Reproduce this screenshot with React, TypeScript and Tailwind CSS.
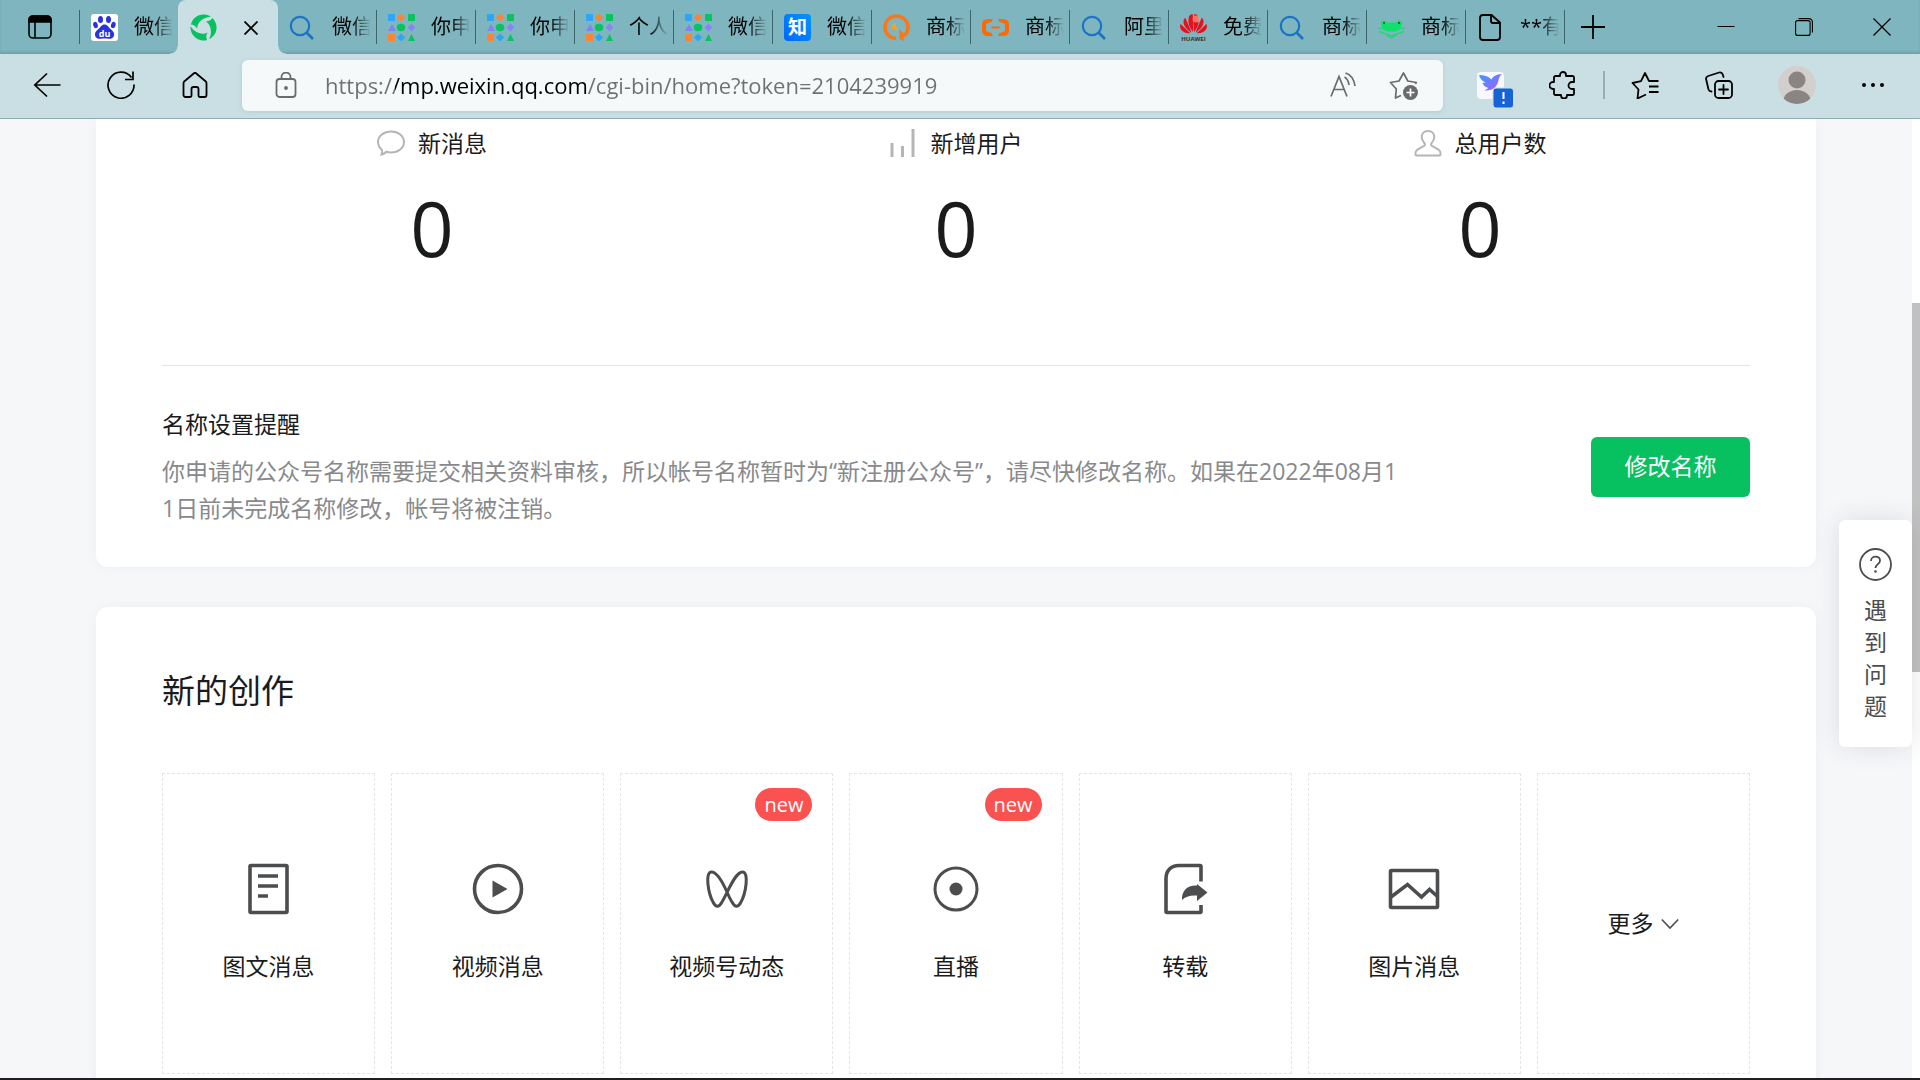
import type { ReactNode } from "react";

const BLADE = "M9 -9.400A13 13 0 0 1 5.500 11.800C8.800 6 8 -2.800 2.300 -6C5 -6 7.500 -7 9 -9.400Z";

const WechatFavicon = () => (
  <svg viewBox="-13.5 -13.5 27 27" className="size-[27px]" fill="#07c160">
    <path d={BLADE} />
    <path d={BLADE} transform="rotate(120)" />
    <path d={BLADE} transform="rotate(240)" />
  </svg>
);

const BaiduFavicon = () => (
  <svg viewBox="0 0 27 27" className="size-[27px]">
    <rect width="27" height="27" rx="3" fill="#fff" />
    <g fill="#2932e1">
      <ellipse cx="9.500" cy="5.500" rx="2.500" ry="3.500" />
      <ellipse cx="17.500" cy="5.500" rx="2.500" ry="3.500" />
      <ellipse cx="4.500" cy="11" rx="2.300" ry="3.200" transform="rotate(-15 4.500 11)" />
      <ellipse cx="22.300" cy="11" rx="2.300" ry="3.200" transform="rotate(15 22.300 11)" />
      <path d="M13.500 10.500c-3 0-3.800 2.500-6 4.500-2 1.800-4 3.500-3.500 6.200.6 3.200 3.500 3.800 5.500 3.500 2.500-.3 5.500-.3 8 0 2.200.2 5-.3 5.600-3.500.5-2.700-1.600-4.400-3.600-6.200-2.200-2-3-4.500-6-4.500z" />
    </g>
    <text x="13.500" y="22.500" textAnchor="middle" fontSize="9" fontWeight="700" fill="#fff" fontFamily="Open Sans">
      du
    </text>
  </svg>
);

const SearchFavicon = () => (
  <svg viewBox="0 0 27 27" className="size-[27px]" fill="none" stroke="#1a73c9" strokeWidth="2.200">
    <circle cx="11" cy="12" r="9.200" />
    <path d="M17.500 18.500l6.500 6.500" strokeWidth="2.600" />
  </svg>
);

const GridFavicon = () => (
  <svg viewBox="0 0 27 27" className="size-[27px]">
    <rect x="0" y="0" width="7" height="7" fill="#2ea6f7" />
    <path d="M13 -0.500l4.200 4-4.200 4-4.200-4z" fill="#fa8535" />
    <rect x="20" y="0" width="7" height="7" fill="#0bc160" />
    <path d="M4 10l4 7H0z" fill="#7f83f7" />
    <ellipse cx="13" cy="13.500" rx="4.300" ry="3.700" fill="#0bc160" />
    <path d="M23.500 9.500l3.800 4-3.800 4-3.800-4z" fill="#8a83f7" />
    <rect x="0" y="20" width="7" height="7" fill="#fa8535" />
    <path d="M13 19.500l4.200 4-4.200 4-4.200-4z" fill="#2ea6f7" />
    <path d="M23.500 20l3.500 7h-7z" fill="#0bc160" />
  </svg>
);

const ZhihuFavicon = () => (
  <span className="flex size-[27px] items-center justify-center rounded bg-gradient-to-tr from-[#0066ff] to-[#0095ff] text-[19px] leading-none font-bold text-white">
    知
  </span>
);

const OrangeQFavicon = () => (
  <svg viewBox="0 0 27 27" className="size-[27px]" fill="none">
    <path d="M13 24.500C6 24 2 19 2 13A11.500 11 0 0 1 25 13C25 16.500 23.800 19 22 21" stroke="#f8781a" strokeWidth="3.600" />
    <path d="M11.500 10.500l-2 3M13.500 14.500l-1.500-1" stroke="#fba026" strokeWidth="3" strokeLinecap="round" />
    <path d="M16 15.500l8.500 6.500-4 1 .5 4-4.500-1.500z" fill="#f8781a" />
  </svg>
);

const AliyunFavicon = () => (
  <svg viewBox="0 0 27 27" className="size-[27px]" fill="#ff6a00">
    <path d="M11 5H5.500A5.500 5.500 0 0 0 0 10.500v6A5.500 5.500 0 0 0 5.500 22H11l-1.500-3-4-1.200c-.8-.2-1.500-.9-1.500-1.700v-5.200c0-.8.7-1.500 1.500-1.700l4-1.200z" />
    <path d="M16 5h5.500a5.500 5.500 0 0 1 5.500 5.500v6a5.500 5.500 0 0 1-5.500 5.500H16l1.500-3 4-1.200c.8-.2 1.500-.9 1.500-1.700v-5.200c0-.8-.7-1.500-1.500-1.700l-4-1.200z" />
    <rect x="9.500" y="12.500" width="8" height="2" />
  </svg>
);

const HuaweiFavicon = () => (
  <svg viewBox="0 0 27 27" className="size-[27px]">
    <g fill="#e8101c">
      <path d="M12.800 18C9 13 7.500 8 9 2.500c.6-1.700 2-2.300 3.600-2.500 1 5 1 12 .2 18z" />
      <path d="M14.200 18C18 13 19.500 8 18 2.500c-.6-1.700-2-2.300-3.600-2.500-1 5-1 12-.2 18z" />
      <path d="M11.500 18.500C7 16 3.500 12 3.500 7.500c0-1.500.5-2.800 1.800-3.800C7 8 9.500 13 11.500 18.500z" />
      <path d="M15.500 18.500c4.500-2.500 8-6.500 8-11 0-1.500-.5-2.800-1.800-3.800-1.700 4.300-4.200 9.300-6.200 14.800z" />
      <path d="M10.500 19.300C5.500 19.500 1 17.500.2 13.500c-.3-1.500 0-2.700.5-3.500 2.800 3 6.300 6 9.800 9.300z" />
      <path d="M16.500 19.300c5 .2 9.500-1.800 10.300-5.800.3-1.500 0-2.700-.5-3.500-2.800 3-6.300 6-9.800 9.300z" />
    </g>
    <circle cx="16" cy="5" r="3.500" fill="#ff9a86" opacity=".7" />
    <text x="13.500" y="26.500" textAnchor="middle" fontSize="6" fontWeight="700" fill="#333" fontFamily="Open Sans">
      HUAWEI
    </text>
  </svg>
);

const FrogFavicon = () => (
  <svg viewBox="0 0 27 27" className="size-[27px]">
    <g fill="#0fe069">
      <circle cx="6" cy="9.500" r="3" />
      <circle cx="21" cy="9.500" r="3" />
      <path d="M5 10c4-2 13-2 17 0 2.500 3 1 5-1 6-4 2-11 2-15 0-2-1-3.500-3-1-6z" />
    </g>
    <path d="M.5 13.500l2.500 1.500M26.500 13.500L24 15M1 17.500l12.500 4.300L26 17.500M8.500 21.500l5 2 5-2" fill="none" stroke="#0fe069" strokeWidth="1.300" />
    <circle cx="6" cy="9" r="1" fill="#143" />
    <circle cx="21" cy="9" r="1" fill="#143" />
  </svg>
);

const PageFavicon = () => (
  <svg viewBox="0 0 27 27" className="size-[27px]" fill="none" stroke="#000" strokeWidth="1.800">
    <path d="M6 1h8.500L23 8.500V23a3 3 0 0 1-3 3H6a3 3 0 0 1-3-3V4a3 3 0 0 1 3-3z" />
    <path d="M14 1v6a2 2 0 0 0 2 2H23" />
  </svg>
);

type Tab = { title: string; icon: ReactNode; noSeparator?: boolean };

const tabsAfterActive: Tab[] = [
  { title: "微信", icon: <SearchFavicon />, noSeparator: true },
  { title: "你申", icon: <GridFavicon /> },
  { title: "你申", icon: <GridFavicon /> },
  { title: "个人", icon: <GridFavicon /> },
  { title: "微信", icon: <GridFavicon /> },
  { title: "微信", icon: <ZhihuFavicon /> },
  { title: "商标", icon: <OrangeQFavicon /> },
  { title: "商标", icon: <AliyunFavicon /> },
  { title: "阿里", icon: <SearchFavicon /> },
  { title: "免费", icon: <HuaweiFavicon /> },
  { title: "商标", icon: <SearchFavicon /> },
  { title: "商标", icon: <FrogFavicon /> },
  { title: "**有", icon: <PageFavicon /> },
];

const Separator = () => <span className="h-[34px] w-px shrink-0 bg-[#3f656b]" />;

const BrowserTab = ({ title, icon, noSeparator }: Tab) => (
  <>
    {!noSeparator && <Separator />}
    <button type="button" role="tab" aria-selected={false} className="flex h-full w-[98px] items-center pl-[11px] text-left">
      <span className="w-[27px] shrink-0">{icon}</span>
      <span className="ml-4 w-10 text-xl leading-7 whitespace-nowrap text-black [mask-image:linear-gradient(90deg,#000_20px,transparent_39px)]">
        {title}
      </span>
    </button>
  </>
);

const TabStrip = () => (
  <div className="flex h-[54px] shrink-0 items-center bg-[#7fb5be] shadow-[inset_0_-2px_2px_rgba(60,110,120,0.25)]">
    <button type="button" aria-label="标签页操作" className="flex w-[79px] shrink-0 justify-center">
      <svg viewBox="0 0 24 24" className="size-6" fill="none" stroke="#000" strokeWidth="1.600">
        <rect x="1" y="1" width="22" height="22" rx="4" />
        <path d="M1 5a4 4 0 0 1 4-4h14a4 4 0 0 1 4 4v2H1z" fill="#000" />
        <path d="M7 7v16" />
      </svg>
    </button>
    <div role="tablist" className="flex h-full items-center">
      <BrowserTab title="微信" icon={<BaiduFavicon />} />
      <div
        role="tab"
        aria-selected
        className="relative flex h-full w-[100px] items-center justify-between rounded-t-lg bg-[#c9dfe3] pr-5 pl-3 before:absolute before:bottom-0 before:-left-2 before:size-2 before:bg-[radial-gradient(circle_at_0_0,transparent_7px,#c9dfe3_8px)] after:absolute after:-right-2 after:bottom-0 after:size-2 after:bg-[radial-gradient(circle_at_100%_0,transparent_7px,#c9dfe3_8px)]"
      >
        <WechatFavicon />
        <button type="button" aria-label="关闭标签页" className="mt-0.5">
          <svg viewBox="0 0 14 14" className="size-3.5" stroke="#000" strokeWidth="1.800">
            <path d="M0.500 0.500l13 13M13.500 0.500l-13 13" />
          </svg>
        </button>
      </div>
      {tabsAfterActive.map((tab, i) => (
        <BrowserTab key={i} {...tab} />
      ))}
      <Separator />
    </div>
    <button type="button" aria-label="新建标签页" className="ml-4">
      <svg viewBox="0 0 24 24" className="size-6" stroke="#000" strokeWidth="1.800">
        <path d="M12 0v24M0 12h24" />
      </svg>
    </button>
    <div className="mr-[29px] ml-auto flex items-center gap-[60px]">
      <button type="button" aria-label="最小化">
        <svg viewBox="0 0 18 18" className="size-[18px]" stroke="#000" strokeWidth="1">
          <path d="M0.500 8.500h17" />
        </svg>
      </button>
      <button type="button" aria-label="还原">
        <svg viewBox="0 0 18 18" className="size-[18px]" fill="none" stroke="#000" strokeWidth="1.100">
          <rect x="0.600" y="2.600" width="14.500" height="14.800" rx="2" />
          <path d="M3.500 0.600h10.500a3.400 3.400 0 0 1 3.400 3.400v10.500" />
        </svg>
      </button>
      <button type="button" aria-label="关闭">
        <svg viewBox="0 0 18 18" className="size-[18px]" stroke="#000" strokeWidth="1.200">
          <path d="M0.500 0.500l17 17M17.500 0.500l-17 17" />
        </svg>
      </button>
    </div>
  </div>
);

const ToolButton = ({ label, children }: { label: string; children: ReactNode }) => (
  <button type="button" aria-label={label} className="flex size-10 shrink-0 items-center justify-center">
    {children}
  </button>
);

const Toolbar = () => (
  <div className="flex h-[65px] shrink-0 items-center border-b border-[#8fabb3] bg-[#c9dfe3] px-[27px] pb-0.5">
    <div className="flex gap-[34px]">
      <ToolButton label="返回">
        <svg viewBox="0 0 28 28" className="size-7" fill="none" stroke="#000" strokeWidth="1.700">
          <path d="M27.500 14H1.500M14 2.500L1.800 14 14 25.500" />
        </svg>
      </ToolButton>
      <ToolButton label="刷新">
        <svg viewBox="0 0 28 28" className="size-7" fill="none" stroke="#000" strokeWidth="1.700">
          <path d="M27 13.500A13 13 0 1 1 24.500 6.500" />
          <path d="M26 0.500v8h-8" />
        </svg>
      </ToolButton>
      <ToolButton label="主页">
        <svg viewBox="0 0 26 26" className="size-[26px]" fill="none" stroke="#000" strokeWidth="1.800" strokeLinejoin="round">
          <path d="M1.500 11.500c0-.9.400-1.700 1-2.300L12 1.200c.6-.5 1.400-.5 2 0l9.500 8c.6.600 1 1.400 1 2.300V23a2 2 0 0 1-2 2H18a1.500 1.500 0 0 1-1.500-1.500V17a2 2 0 0 0-2-2h-3a2 2 0 0 0-2 2v6.500A1.500 1.500 0 0 1 8 25H3.500a2 2 0 0 1-2-2z" />
        </svg>
      </ToolButton>
    </div>
    <div className="ml-[27px] flex h-[51px] min-w-0 flex-1 items-center rounded-md bg-[#f5f9fa] pr-5 pl-6 shadow-[0_1px_4px_rgba(60,110,120,0.15)]">
      <ToolButton label="查看站点信息">
        <svg viewBox="0 0 22 26" className="h-[26px] w-[22px]" fill="none" stroke="#6b6b6b" strokeWidth="1.800">
          <rect x="1.500" y="7" width="19" height="18" rx="3" />
          <path d="M6.500 7V5a4.500 4.500 0 0 1 9 0v2" />
          <circle cx="11" cy="16" r="1" fill="#6b6b6b" />
        </svg>
      </ToolButton>
      <input
        type="text"
        aria-label="地址栏"
        defaultValue="https://mp.weixin.qq.com/cgi-bin/home?token=2104239919"
        className="ml-[19px] h-9 min-w-0 flex-1 bg-[linear-gradient(90deg,#6e7072_70px,#000_70px,#000_262px,#6e7072_262px)] bg-clip-text text-[22px] leading-9 text-transparent outline-none"
      />
      <ToolButton label="大声朗读">
        <svg viewBox="0 0 26 26" className="size-[26px]" fill="none" stroke="#6b6b6b" strokeWidth="1.700">
          <path d="M1 24.500L9 4.500l8 20M3.800 17.500h10.500" />
          <path d="M14.500 5c2.500 1.500 4 4 4.500 8M15.500 1C20.500 2.500 24 7 25 14" />
        </svg>
      </ToolButton>
      <span className="ml-5 flex">
        <ToolButton label="添加到收藏夹">
          <svg viewBox="0 0 29 29" className="size-[29px]" fill="none" stroke="#6b6b6b" strokeWidth="1.700" strokeLinejoin="round">
            <path d="M12 24.500L6.500 27l.8-9L1.500 11.500l8.500-1.500L14.500 2l4.300 8 8.500 1.500-1 1.500" />
            <circle cx="21.500" cy="21.500" r="7.500" fill="#6b6b6b" stroke="none" />
            <path d="M21.500 17.500v8M17.500 21.500h8" stroke="#fff" />
          </svg>
        </ToolButton>
      </span>
    </div>
    <div className="ml-8 flex items-center">
      <ToolButton label="扩展：迅雷">
        <svg viewBox="0 0 40 46" className="h-[46px] w-10 shrink-0">
          <defs>
            <linearGradient id="bird" x1="0" y1="0" x2="1" y2="1">
              <stop offset="0" stopColor="#3d9bff" />
              <stop offset="1" stopColor="#a35cff" />
            </linearGradient>
          </defs>
          <rect x="2" y="10" width="27" height="27" rx="4" fill="#f8f8ff" />
          <path
            d="M4 13c5 0 9 1 12.500 4.500C18 14 21.500 12.500 27 12c-2 1.500-3 3.500-3.500 6-1 6-5 11-14 10.500l4-2.500c-3-.5-5-2.500-6-5l3-.5C7 19 5 16.500 4 13z"
            fill="url(#bird)"
          />
          <rect x="18" y="26" width="20.500" height="20" rx="3" fill="#1763d4" stroke="#c9dfe3" />
          <path d="M28.500 30v7M28.500 39.500v2.500" stroke="#fff" strokeWidth="2" />
        </svg>
      </ToolButton>
      <span className="ml-7 flex">
        <ToolButton label="扩展">
          <svg viewBox="0 0 28 28" className="size-7" fill="none" stroke="#000" strokeWidth="1.800" strokeLinejoin="round">
            <path d="M5 6.500a1.500 1.500 0 0 1 1.500-1.500H11V4a3 3 0 0 1 6 0v1h6.500A1.500 1.500 0 0 1 25 6.500V11h-2a3 3 0 0 0 0 7h2v4.500a1.500 1.500 0 0 1-1.500 1.500H18v.5a3 3 0 0 1-6 0V24H6.500A1.500 1.500 0 0 1 5 22.500V18H4a3.500 3.500 0 0 1 0-7h1z" />
          </svg>
        </ToolButton>
      </span>
      <span className="mx-5 h-7 w-0.5 bg-[#97aeb3]" />
      <ToolButton label="收藏夹">
        <svg viewBox="0 0 28 28" className="size-7" fill="none" stroke="#000" strokeWidth="1.800" strokeLinejoin="round">
          <path d="M15 23.500l-8.500 4 1-9L1.500 12 10 10.200 14 2l4 8h9.500M18 15.500h9.500M18 21h9.500" />
        </svg>
      </ToolButton>
      <span className="ml-[34px] flex">
        <ToolButton label="集锦">
          <svg viewBox="0 0 28 28" className="size-7" fill="none" stroke="#000" strokeWidth="1.800" strokeLinecap="round">
            <rect x="10" y="10" width="17" height="17" rx="3.500" />
            <path d="M18.500 14v9M14 18.500h9M6.500 20.500c-1.500 0-2.500-.8-3-2L1.200 8.500C.8 7 1.600 5.500 3.200 5l11-3.500c1.600-.4 3 .4 3.600 2l.7 2.500" />
          </svg>
        </ToolButton>
      </span>
      <span className="ml-[38px] flex">
        <ToolButton label="个人资料">
          <svg viewBox="0 0 38 38" className="size-[38px]">
            <clipPath id="avatar">
              <circle cx="19" cy="19" r="19" />
            </clipPath>
            <g clipPath="url(#avatar)">
              <rect width="38" height="38" fill="#d2cfcc" />
              <circle cx="19" cy="14" r="8.500" fill="#8a8583" />
              <ellipse cx="19" cy="36" rx="14" ry="12" fill="#8a8583" />
            </g>
          </svg>
        </ToolButton>
      </span>
      <span className="ml-9 flex">
        <ToolButton label="设置及其他">
          <svg viewBox="0 0 24 6" className="h-1.5 w-6">
            <circle cx="3" cy="3" r="2" />
            <circle cx="12" cy="3" r="2" />
            <circle cx="21" cy="3" r="2" />
          </svg>
        </ToolButton>
      </span>
    </div>
  </div>
);

const stats = [
  {
    label: "新消息",
    value: 0,
    icon: (
      <path d="M4.500 25.500c.7-1.500.9-3 .5-4.500C2.500 18.800 1 16 1 13 1 7 6.800 2.500 14 2.500S27 7 27 13s-5.800 10.500-13 10.500c-1.700 0-3.200-.2-4.600-.7-1.400 1.500-3 2.400-4.900 2.700z" />
    ),
  },
  { label: "新增用户", value: 0, icon: <path d="M2 14v14M12.500 17v11M23 0v28" strokeWidth="3" /> },
  {
    label: "总用户数",
    value: 0,
    icon: (
      <path d="M14 2c-3.800 0-6.300 2.600-6.300 6 0 2.500 1.300 4.400 2.600 6 .8 1 .8 2.300-.3 3L3.500 20.500C2 21.500 1.500 22.500 1.500 24v1.500c0 .5.5 1 1 1h23c.5 0 1-.5 1-1V24c0-1.500-.5-2.500-2-3.500L18 17c-1.100-.7-1.100-2-.3-3 1.300-1.600 2.600-3.500 2.600-6 0-3.400-2.500-6-6.300-6z" />
    ),
  },
];

const StatsCard = () => (
  <section className="rounded-b-xl bg-white px-[66px] pb-10 shadow-[0_0_12px_rgba(100,110,130,0.06)]">
    <div className="grid grid-cols-3 border-b border-[#e4e5e6] px-2 pt-[7px] pb-[85px]">
      {stats.map((s) => (
        <a key={s.label} href="#stats" className="flex flex-col items-center">
          <span className="flex h-[34px] items-center gap-[13px]">
            <svg viewBox="0 0 28 28" className="size-7" fill="none" stroke="#b4b5b7" strokeWidth="2">
              {s.icon}
            </svg>
            <span className="text-[23px] leading-[34px]">{s.label}</span>
          </span>
          <span className="mt-4 text-[76px] leading-[104px]">{s.value}</span>
        </a>
      ))}
    </div>
    <div className="flex items-center justify-between pt-10">
      <div className="text-[23px] leading-[37px]">
        <h3>名称设置提醒</h3>
        <p className="mt-2.5 text-[#88898b]">
          你申请的公众号名称需要提交相关资料审核，所以帐号名称暂时为“新注册公众号”，请尽快修改名称。如果在2022年08月1
          <br />
          1日前未完成名称修改，帐号将被注销。
        </p>
      </div>
      <button type="button" className="h-[60px] w-[159px] shrink-0 rounded-md bg-[#07c160] text-[23px] text-white">
        修改名称
      </button>
    </div>
  </section>
);

const creations: { label: string; isNew?: boolean; icon: ReactNode }[] = [
  {
    label: "图文消息",
    icon: (
      <>
        <rect x="11" y="6.500" width="37" height="47" rx="1" />
        <path d="M19 17h20M19 27h20M19 37h10" />
      </>
    ),
  },
  {
    label: "视频消息",
    icon: (
      <>
        <circle cx="30" cy="30" r="23.500" />
        <path d="M24.500 21.500v17L39.500 30z" fill="#4c4d4f" stroke="none" />
      </>
    ),
  },
  {
    label: "视频号动态",
    isNew: true,
    icon: (
      <path
        strokeWidth="3"
        d="M30 33C26 24 20 13 14.500 13c-7 0-3 22 1.500 30 3 6 6 5.500 9 0C31 33 38 13 45.500 13c7 0 3 22-1.500 30-3 6-6 5.500-9 0-2-3-3.500-6.500-5-10z"
      />
    ),
  },
  {
    label: "直播",
    isNew: true,
    icon: (
      <>
        <circle cx="30" cy="30" r="21" strokeWidth="3" />
        <circle cx="30" cy="30" r="6.500" fill="#4c4d4f" stroke="none" />
      </>
    ),
  },
  {
    label: "转载",
    icon: (
      <>
        <path d="M46 22.500V7.500a1 1 0 0 0-1-1H24c-8 0-13 5-13 13v33a1 1 0 0 0 1 1h33a1 1 0 0 0 1-1V46" />
        <path d="M27 41c-.5-9 5-15 15-14.500V25l10.500 8.500L42 42v-5.500c-7-.5-11.500 1-15 4.500z" fill="#4c4d4f" stroke="none" />
      </>
    ),
  },
  {
    label: "图片消息",
    icon: (
      <>
        <rect x="6.500" y="11.500" width="47" height="37" rx="1" />
        <path d="M7 38l16.500-12.500L37.500 38l8-7.500 8 7" />
      </>
    ),
  },
];

const CreationTile = ({ label, isNew, icon }: (typeof creations)[number]) => (
  <button type="button" className="relative flex h-[301px] flex-col items-center border border-dashed border-[#e4e5e6] pt-[85px]">
    {isNew && (
      <span className="absolute top-3.5 right-5 rounded-full bg-[#fa5151] px-[9px] text-[20px] leading-[33px] text-white">new</span>
    )}
    <svg viewBox="0 0 60 60" className="size-[60px]" fill="none" stroke="#4c4d4f" strokeWidth="3.600">
      {icon}
    </svg>
    <span className="mt-[30px] text-[23px] leading-[34px]">{label}</span>
  </button>
);

const CreationCard = () => (
  <section className="mt-10 rounded-t-xl bg-white px-[66px] pt-[60px] pb-10 shadow-[0_0_12px_rgba(100,110,130,0.06)]">
    <h2 className="text-[33px] leading-[48px]">新的创作</h2>
    <div className="mt-[58px] grid grid-cols-7 gap-4">
      {creations.map((c) => (
        <CreationTile key={c.label} {...c} />
      ))}
      <button type="button" className="flex h-[301px] items-center justify-center gap-2 border border-dashed border-[#e4e5e6] text-[23px]">
        更多
        <svg viewBox="0 0 18 12" className="h-3 w-[18px]" fill="none" stroke="#4c4d4f" strokeWidth="1.600">
          <path d="M0.800 1.500L9 10l8.200-8.500" />
        </svg>
      </button>
    </div>
  </section>
);

const HelpWidget = () => (
  <button
    type="button"
    className="absolute top-[401px] right-2 flex w-[73px] flex-col items-center rounded-md bg-white pt-7 pb-[25px] text-[23px] leading-8 text-[#4c4d4f] shadow-[0_0_26px_rgba(40,50,70,0.13)]"
  >
    <svg viewBox="0 0 33 33" className="mb-[13px] size-[33px]" fill="none" stroke="#4c4d4f" strokeWidth="1.800">
      <circle cx="16.500" cy="16.500" r="15.500" />
      <path d="M12 13c0-2.800 1.900-4.300 4.500-4.300s4.500 1.600 4.500 4c0 3.300-4.500 3.600-4.500 7.300" />
      <circle cx="16.500" cy="23.500" r="1.300" fill="#4c4d4f" stroke="none" />
    </svg>
    <span className="w-[23px] break-all">遇到问题</span>
  </button>
);

export default function App() {
  return (
    <div className="flex h-screen flex-col overflow-hidden font-['Open_Sans','Noto_Sans_CJK_SC',sans-serif] text-[#1a1b1c]">
      <TabStrip />
      <Toolbar />
      <div className="relative flex min-h-0 flex-1 bg-[#f6f7f9]">
        <main className="min-w-0 flex-1 overflow-hidden px-24">
          <StatsCard />
          <CreationCard />
        </main>
        <div className="w-2 shrink-0 bg-white pt-[184px]">
          <div className="h-[369px] bg-[#c1c1c1]" />
        </div>
        <HelpWidget />
      </div>
      <div className="h-0.5 shrink-0 bg-[#1f1f23]" />
    </div>
  );
}
